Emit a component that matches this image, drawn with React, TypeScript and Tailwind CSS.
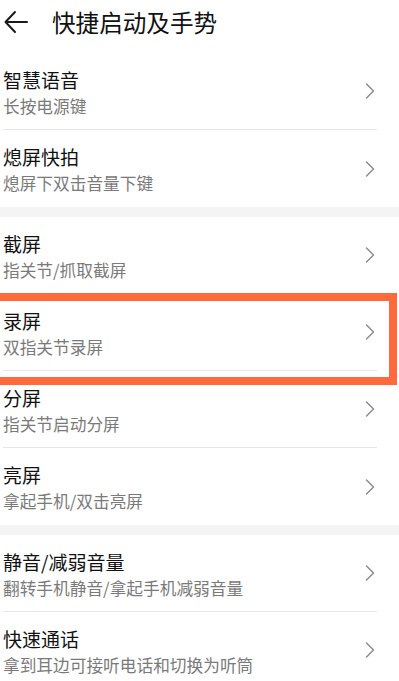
import React from "react";

type Item = { title: string; sub: string; divider: boolean };

const groups: Item[][] = [
  [
    { title: "智慧语音", sub: "长按电源键", divider: true },
    { title: "熄屏快拍", sub: "熄屏下双击音量下键", divider: false },
  ],
  [
    { title: "截屏", sub: "指关节/抓取截屏", divider: true },
    { title: "录屏", sub: "双指关节录屏", divider: true },
    { title: "分屏", sub: "指关节启动分屏", divider: true },
    { title: "亮屏", sub: "拿起手机/双击亮屏", divider: false },
  ],
  [
    { title: "静音/减弱音量", sub: "翻转手机静音/拿起手机减弱音量", divider: true },
    { title: "快速通话", sub: "拿到耳边可接听电话和切换为听筒", divider: true },
  ],
];

function Chevron() {
  return (
    <svg width="10" height="16" viewBox="0 0 10 16" fill="none" className="shrink-0">
      <path d="M1.5 1 L8.5 8 L1.5 15" stroke="#8c8c8c" strokeWidth="1.5" strokeLinecap="round" strokeLinejoin="round" />
    </svg>
  );
}

function Row({ item }: { item: Item }) {
  return (
    <div className="h-[77px] pl-[3px] pr-[22px]">
      <div
        className={
          "h-full flex items-center justify-between pr-[2px] " +
          (item.divider ? "border-b border-[#e6e6e6]" : "")
        }
      >
        <div className="flex flex-col pt-[1px]">
          <div className="text-[19px] leading-[25px] text-[#111]">{item.title}</div>
          <div className="mt-[3px] text-[16.7px] leading-[22px] text-[#7a7a7a]">{item.sub}</div>
        </div>
        <Chevron />
      </div>
    </div>
  );
}

export default function App() {
  return (
    <div
      className="relative w-[399px] h-[681px] overflow-hidden bg-white"
      style={{ fontFamily: '"Noto Sans CJK SC", "Noto Sans", sans-serif' }}
    >
      <div className="h-[53px] flex items-center">
        <svg width="26" height="24" viewBox="0 0 26 24" fill="none" className="ml-[4px] mt-[-9px]">
          <path d="M2 12 H23 M11 2 L1.5 12 L11 22" stroke="#1a1a1a" strokeWidth="2" strokeLinecap="round" strokeLinejoin="round" />
        </svg>
        <div className="ml-[22px] mt-[-10px] text-[23.6px] leading-[30px] text-[#111]">快捷启动及手势</div>
      </div>
      {groups.map((g, gi) => (
        <div key={gi}>
          {gi > 0 && <div className="h-[10px] bg-[#f4f4f4]" />}
          {g.map((it, i) => (
            <Row key={i} item={it} />
          ))}
        </div>
      ))}
      <div className="absolute left-[-10px] top-[293px] w-[407px] h-[92px] border-[8px] border-[#fe6a3b] pointer-events-none" />
    </div>
  );
}
